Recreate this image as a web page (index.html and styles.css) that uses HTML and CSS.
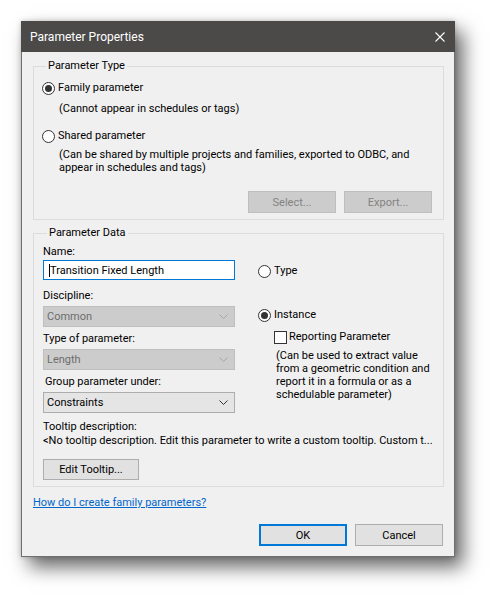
FILE: index.html
```html
<!DOCTYPE html>
<html lang="en">
<head>
<meta charset="utf-8">
<title>Parameter Properties</title>
<link rel="stylesheet" href="styles.css">
</head>
<body>
<div class="desk">
<div class="dialog">
  <div class="titlebar">
    <span class="title">Parameter Properties</span>
    <svg class="close" width="10" height="10" viewBox="0 0 10 10"><path d="M0.5 0.5 L9.5 9.5 M9.5 0.5 L0.5 9.5" stroke="#fff" stroke-width="1.1" fill="none"/></svg>
  </div>
  <div class="content">
    <fieldset class="group g1">
      <legend>Parameter Type</legend>
      <div class="radio-row first"><span class="radio on"></span>Family parameter</div>
      <div class="note">(Cannot appear in schedules or tags)</div>
      <div class="radio-row second"><span class="radio"></span>Shared parameter</div>
      <div class="note2">(Can be shared by multiple projects and families, exported to ODBC, and<br>appear in schedules and tags)</div>
      <div class="btnrow">
        <div class="btn disabled">Select...</div>
        <div class="btn disabled">Export...</div>
      </div>
    </fieldset>
    <fieldset class="group g2">
      <legend>Parameter Data</legend>
      <div class="cols">
        <div class="leftcol">
          <div class="lbl l-name">Name:</div>
          <div class="textbox"><span class="caret"></span>Transition Fixed Length</div>
          <div class="lbl l-disc">Discipline:</div>
          <div class="select disabled"><span>Common</span><svg class="chev" width="9" height="5" viewBox="0 0 9 5"><path d="M0.5 0.5 L4.5 4.5 L8.5 0.5" stroke="currentColor" fill="none"/></svg></div>
          <div class="lbl l-sub">Type of parameter:</div>
          <div class="select disabled"><span>Length</span><svg class="chev" width="9" height="5" viewBox="0 0 9 5"><path d="M0.5 0.5 L4.5 4.5 L8.5 0.5" stroke="currentColor" fill="none"/></svg></div>
          <div class="lbl l-sub indent">Group parameter under:</div>
          <div class="select"><span>Constraints</span><svg class="chev" width="9" height="5" viewBox="0 0 9 5"><path d="M0.5 0.5 L4.5 4.5 L8.5 0.5" stroke="currentColor" fill="none"/></svg></div>
        </div>
        <div class="rightcol">
          <div class="radio-row r-type"><span class="radio"></span>Type</div>
          <div class="radio-row r-inst"><span class="radio on"></span>Instance</div>
          <div class="check-row"><span class="check"></span>Reporting Parameter</div>
          <div class="rnote">(Can be used to extract value<br>from a geometric condition and<br>report it in a formula or as a<br>schedulable parameter)</div>
        </div>
      </div>
      <div class="tip-lbl">Tooltip description:</div>
      <div class="tip-text">&lt;No tooltip description. Edit this parameter to write a custom tooltip. Custom t...</div>
      <div class="btn edit">Edit Tooltip...</div>
    </fieldset>
    <a class="help" href="#">How do I create family parameters?</a>
    <div class="footer">
      <div class="btn ok">OK</div>
      <div class="btn">Cancel</div>
    </div>
  </div>
</div>
</div>
</body>
</html>
```
FILE: styles.css
```css
* { box-sizing: border-box; }
html, body { margin: 0; padding: 0; background: #ffffff; }
body {
  font-family: Roboto, "Noto Sans", sans-serif;
  font-size: 11px;
  color: #000;
}
.desk {
  width: 497px;
  height: 599px;
  padding: 21px 0 0 21px;
  overflow: hidden;
  background: #ffffff;
}
.dialog {
  width: 434px;
  height: 536px;
  border: 1px solid #6f6f6f;
  background: #f0f0f0;
  box-shadow: 8px 10px 18px rgba(0,0,0,0.6), 0 0 5px rgba(0,0,0,0.2);
  display: flex;
  flex-direction: column;
}
.titlebar {
  margin: -1px -1px 0 -1px;
  height: 31px;
  background: #4b4a48;
  color: #fff;
  display: flex;
  align-items: center;
  justify-content: space-between;
  padding: 1px 10px 0 9px;
  font-size: 12px;
}
.close { display: block; }
.content {
  padding: 0 10px 10px 11px;
  display: flex;
  flex-direction: column;
  flex: 1;
}
.group {
  margin: 0;
  border: 1px solid #dcdcdc;
  padding: 0 11px 6px 8px;
  min-width: 0;
}
.group legend {
  padding: 0 2px;
  margin-left: 4px;
  line-height: 16px;
}
.g1 { margin-top: 6px; }
.g2 { margin-top: 5px; padding-left: 9px; padding-bottom: 6px; }
.radio-row {
  display: flex;
  align-items: center;
  line-height: 16px;
  height: 16px;
}
.radio-row.first { margin-top: 6px; }
.radio-row.second { margin-top: 11px; }
.radio {
  width: 13px;
  height: 13px;
  border: 1px solid #333;
  border-radius: 50%;
  background: #fff;
  margin-right: 3px;
  position: relative;
  flex: none;
}
.radio.on::after {
  content: "";
  position: absolute;
  left: 2px; top: 2px;
  width: 7px; height: 7px;
  border-radius: 50%;
  background: #333;
}
.note {
  margin-top: 5px;
  padding-left: 17px;
  line-height: 16px;
}
.note2 {
  margin-top: 4px;
  padding-left: 17px;
  line-height: 13px;
  white-space: nowrap;
}
.btnrow {
  display: flex;
  justify-content: flex-end;
  gap: 8px;
  margin-top: 17px;
}
.btn {
  width: 88px;
  height: 22px;
  border: 1px solid #adadad;
  background: #e1e1e1;
  display: flex;
  align-items: center;
  justify-content: center;
}
.btn.disabled {
  background: #cccccc;
  border-color: #bfbfbf;
  color: #838383;
}
.cols { display: flex; gap: 23px; }
.leftcol { width: 192px; flex: none; }
.lbl { line-height: 16px; }
.l-name { margin-top: 3px; }
.l-disc { margin-top: 8px; margin-bottom: 2px; }
.l-sub { margin-top: 4px; margin-bottom: 2px; }
.indent { padding-left: 2px; }
.textbox {
  height: 20px;
  border: 1px solid #0078d7;
  background: #fff;
  display: flex;
  align-items: center;
  padding-left: 5px;
}
.caret {
  width: 1px; height: 13px; background: #000;
}
.select {
  height: 21px;
  border: 1px solid #adadad;
  background: #e5e5e5;
  display: flex;
  align-items: center;
  justify-content: space-between;
  padding: 0 6px 0 3px;
  color: #000;
}
.select .chev { color: #333; display: block; }
.select.disabled { background: #cccccc; border-color: #bfbfbf; color: #6d6d6d; }
.select.disabled .chev { color: #a6a6a6; }
.rightcol { flex: 1; white-space: nowrap; }
.r-type { margin-top: 22px; }
.r-inst { margin-top: 28px; }
.check-row {
  display: flex;
  align-items: center;
  line-height: 16px;
  margin-top: 6px;
  padding-left: 16px;
}
.check {
  width: 13px; height: 13px;
  border: 1px solid #333;
  background: #fff;
  margin-right: 2px;
}
.rnote {
  margin-top: 4px;
  padding-left: 18px;
  line-height: 13px;
}
.tip-lbl { margin-top: 7px; line-height: 14px; }
.tip-text { line-height: 14px; white-space: nowrap; overflow: hidden; }
.btn.edit { width: 96px; height: 21px; margin-top: 11px; }
.help {
  margin-top: 8px;
  line-height: 16px;
  color: #0066cc;
  text-decoration: underline;
  align-self: flex-start;
}
.footer {
  margin-top: auto;
  display: flex;
  justify-content: flex-end;
  gap: 8px;
  padding-right: 1px;
}
.btn.ok { border: 2px solid #0078d7; }
```
